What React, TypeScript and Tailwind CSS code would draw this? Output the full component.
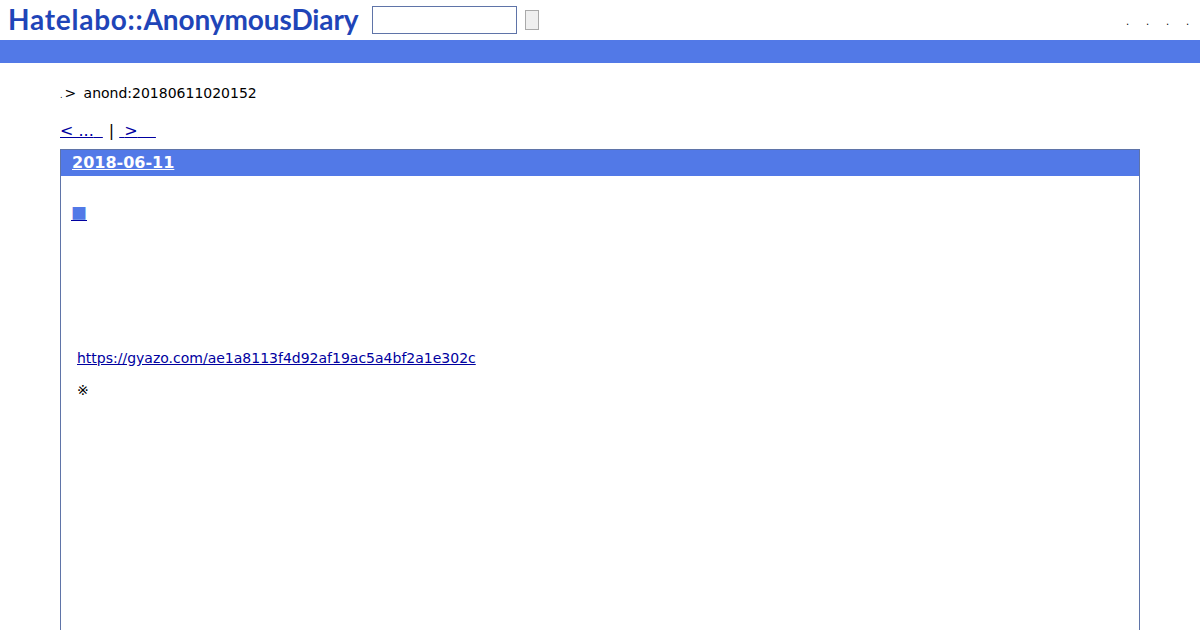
export default function App() {
  const font = { fontFamily: '"DejaVu Sans", sans-serif' };
  return (
    <div className="h-[630px] w-[1200px] overflow-hidden bg-white text-black" style={font}>
      <header className="flex h-10 items-start">
        <a className="ml-2 mt-[1px] block h-9 w-[352px] whitespace-nowrap text-[28px] font-bold leading-9 text-[#1f45b8] [font-family:Lato,sans-serif]">
          <span className="tracking-[0.75px]">Hatelabo::</span>
          <span className="tracking-[-0.1px]">AnonymousDiary</span>
        </a>
        <input className="ml-3 mt-[6px] h-7 w-[145px] border border-[#5f74a8] bg-white" />
        <button className="ml-2 mt-[10px] h-5 w-[14px] border border-[#a9a9a9] bg-[#efefef]" />
        <nav className="ml-auto mr-[11px] mt-[14px] flex gap-[17px] text-[10px] leading-4 text-black">
          <span className="w-[3px]">.</span>
          <span className="w-[3px]">.</span>
          <span className="w-[3px]">.</span>
          <span className="w-[3px]">.</span>
        </nav>
      </header>
      <div className="h-[23px] bg-[#5279e7]" />
      <main className="px-[60px]">
        <div className="mt-[21px] flex h-[18px] items-center text-sm leading-[18px]">
          <span className="self-end text-[8px] leading-[12px]">.</span>
          <span className="ml-[2px] w-[19px]">&gt;</span>
          <span>anond:20180611020152</span>
        </div>
        <div className="mt-[20px] flex h-[18px] items-center text-base leading-[18px]">
          <a className="whitespace-pre text-[#0000a0] underline">&lt; ...<span className="tracking-[4px]">{"\u00a0"}</span></a>
          <span className="ml-[6px] mr-[5px]">|</span>
          <a className="whitespace-pre text-[#0000a0] underline">{"\u00a0"}&gt;<span className="tracking-[4px]">{"\u00a0\u00a0"}</span></a>
        </div>
        <section className="mt-[9px] h-[500px] border border-[#5f74a8]">
          <h1 className="flex h-[26px] items-center bg-[#5279e7] pl-[11px] text-base font-bold leading-[26px] text-white">
            <a className="underline">2018-06-11</a>
          </h1>
          <h2 className="mt-[27px] pl-[10px] text-base leading-[18px] [font-family:'Noto_Sans_CJK_JP',sans-serif]">
            <a className="text-[#5279e7] underline decoration-[#0000a0]">■</a>
          </h2>
          <p className="mt-[128px] pl-4 text-sm leading-[18px]">
            <a className="text-[#0000a0] underline">https://gyazo.com/ae1a8113f4d92af19ac5a4bf2a1e302c</a>
          </p>
          <p className="mt-[14px] pl-4 text-sm leading-[18px]">※</p>
        </section>
      </main>
    </div>
  );
}
